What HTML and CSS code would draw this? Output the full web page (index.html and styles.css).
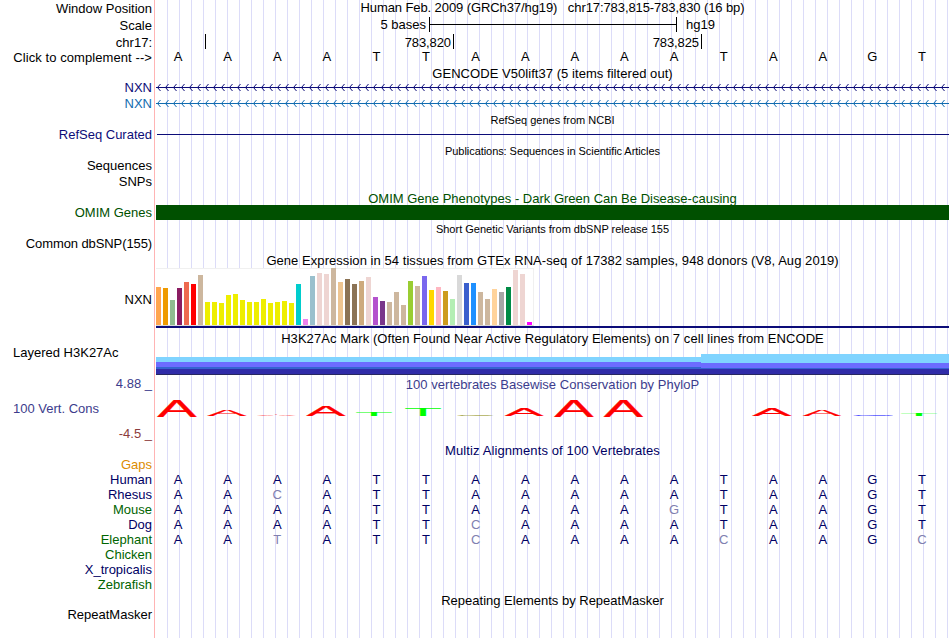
FILE: index.html
```
<!DOCTYPE html>
<html lang="en">
<head>
  <meta charset="UTF-8">
  <title>Genome Browser hg19 chr17:783,815-783,830</title>
  <link rel="stylesheet" href="styles.css">
</head>
<body>
  <div class="browser">
    <div class="row h17">
      <div class="label">Window Position</div>
      <div class="data title position">Human Feb. 2009 (GRCh37/hg19)   chr17:783,815-783,830 (16 bp)</div>
    </div>
    <div class="row h17">
      <div class="label">Scale</div>
      <div class="data scale">
        <span class="scale-name">5 bases</span>
        <span class="scale-bar"></span>
        <span>hg19</span>
      </div>
    </div>
    <div class="row h16">
      <div class="label ruler-label">chr17:</div>
      <div class="data ruler">
        <span class="tick first"></span>
        <span class="tick">783,820</span>
        <span class="tick">783,825</span>
      </div>
    </div>
    <div class="row">
      <div class="label complement">Click to complement --&gt;</div>
      <div class="data bases top-bases" data-seq="AAAATTAAAAATAAGT"></div>
    </div>

    <div class="row">
      <div class="data title gencode">GENCODE V50lift37 (5 items filtered out)</div>
    </div>
    <div class="row h16 navy">
      <div class="label">NXN</div>
      <svg class="data" width="793" height="16">
        <defs>
          <pattern id="arrows" x="1" width="8" height="16" patternUnits="userSpaceOnUse">
            <path d="M3.5 4 L0.5 7.5 L3.5 11" fill="none" stroke="#0c0c78"/>
          </pattern>
        </defs>
        <rect y="7" width="793" height="1" fill="#0c0c78"/>
        <rect width="793" height="16" fill="url(#arrows)"/>
      </svg>
    </div>
    <div class="row blue">
      <div class="label">NXN</div>
      <svg class="data" width="793" height="15">
        <defs>
          <pattern id="arrowsBlue" x="1" width="8" height="15" patternUnits="userSpaceOnUse">
            <path d="M3.5 4 L0.5 7.5 L3.5 11" fill="none" stroke="#116cb0"/>
          </pattern>
        </defs>
        <rect y="7" width="793" height="1" fill="#116cb0"/>
        <rect width="793" height="15" fill="url(#arrowsBlue)"/>
      </svg>
    </div>

    <div class="row h16">
      <div class="data title small refseq-title">RefSeq genes from NCBI</div>
    </div>
    <div class="row h16 navy">
      <div class="label">RefSeq Curated</div>
      <div class="data"><div class="gene-line"></div></div>
    </div>

    <div class="row">
      <div class="data title small publications">Publications: Sequences in Scientific Articles</div>
    </div>
    <div class="row h16">
      <div class="label">Sequences</div>
    </div>
    <div class="row">
      <div class="label">SNPs</div>
    </div>

    <div class="row h16 green">
      <div class="data title omim-title">OMIM Gene Phenotypes - Dark Green Can Be Disease-causing</div>
    </div>
    <div class="row green">
      <div class="label">OMIM Genes</div>
      <div class="data omim"></div>
    </div>

    <div class="row h16">
      <div class="data title small dbsnp">Short Genetic Variants from dbSNP release 155</div>
    </div>
    <div class="row h16">
      <div class="label snp-label">Common dbSNP(155)</div>
    </div>

    <div class="row h16">
      <div class="data title gtex-title">Gene Expression in 54 tissues from GTEx RNA-seq of 17382 samples, 948 donors (V8, Aug 2019)</div>
    </div>
    <div class="row gtex-row">
      <div class="label">NXN</div>
      <div class="data gtex">
        <div class="gtex-bars" id="gtexBars"></div>
      </div>
    </div>

    <div class="row h18">
      <div class="data title h3k-title">H3K27Ac Mark (Often Found Near Active Regulatory Elements) on 7 cell lines from ENCODE</div>
    </div>
    <div class="row h3k-row">
      <div class="label left">Layered H3K27Ac</div>
      <div class="data h3k">
        <div class="h3k-left"></div>
        <div class="h3k-right"></div>
      </div>
    </div>

    <div class="row h18 cons">
      <div class="label">4.88 _</div>
      <div class="data title phylop-title">100 vertebrates Basewise Conservation by PhyloP</div>
    </div>
    <div class="row cons-row cons">
      <div class="label left">100 Vert. Cons</div>
      <svg class="data" id="phylop" width="793" height="32"></svg>
    </div>
    <div class="row h16 cons-min">
      <div class="label">-4.5 _</div>
    </div>

    <div class="row h16 species">
      <div class="data title multiz-title">Multiz Alignments of 100 Vertebrates</div>
    </div>
    <div class="row gaps">
      <div class="label">Gaps</div>
    </div>
    <div class="row species">
      <div class="label">Human</div>
      <div class="data bases" data-seq="AAAATTAAAAATAAGT"></div>
    </div>
    <div class="row species">
      <div class="label">Rhesus</div>
      <div class="data bases" data-seq="AAcATTAAAAATAAGT"></div>
    </div>
    <div class="row species alt">
      <div class="label">Mouse</div>
      <div class="data bases" data-seq="AAAATTAAAAgTAAGT"></div>
    </div>
    <div class="row species">
      <div class="label">Dog</div>
      <div class="data bases" data-seq="AAAATTcAAAATAAGT"></div>
    </div>
    <div class="row species alt">
      <div class="label">Elephant</div>
      <div class="data bases" data-seq="AAtATTcAAAAcAAGc"></div>
    </div>
    <div class="row species alt">
      <div class="label">Chicken</div>
    </div>
    <div class="row species">
      <div class="label">X_tropicalis</div>
    </div>
    <div class="row species alt">
      <div class="label">Zebrafish</div>
    </div>

    <div class="row">
      <div class="data title repeat-title">Repeating Elements by RepeatMasker</div>
    </div>
    <div class="row">
      <div class="label">RepeatMasker</div>
    </div>
  </div>

  <script>
    // lower case = base differs from human
    document.querySelectorAll(".bases").forEach(el => {
      for (const c of el.dataset.seq) {
        const span = document.createElement("span");
        span.textContent = c.toUpperCase();
        if (c !== c.toUpperCase()) span.className = "mismatch";
        el.appendChild(span);
      }
    });

    const heights = [38,37,25,37,43,41,50,23,23,22,30,31,25,23,23,26,22,23,24,22,41,6,49,52,51,57,43,
      46,41,44,48,28,24,23,33,20,44,39,49,35,38,34,26,50,42,42,33,26,36,33,38,55,51,3];
    const brain = Array(13).fill("#eeee00");
    const colors = ["#ffa54f","#ee9a00","#8fbc8f","#8b1c62","#ee6a50","#ff0000","#cdb79e", ...brain,
      "#00cdcd","#ee82ee","#9ac0cd","#eed5d2","#eed5d2","#cdb79e","#eec591","#8b7355","#8b7355",
      "#cdaa7d","#eed5d2","#b452cd","#7a378b","#cdb79e","#cdb79e","#cdb79e","#9acd32","#cdb79e",
      "#7a67ee","#ffd700","#ffb6c1","#cd9b1d","#b4eeb4","#d9d9d9","#3a5fcd","#1e90ff","#cdb79e",
      "#cdb79e","#ffd39b","#a6a6a6","#008b45","#eed5d2","#eed5d2","#ff00ff"];
    const gtex = document.getElementById("gtexBars");
    heights.forEach((h, i) => {
      const bar = document.createElement("div");
      bar.className = "bar";
      bar.style.height = h + "px";
      bar.style.background = colors[i];
      gtex.appendChild(bar);
    });

    // letter, left, width, top, bottom, color
    const logo = [
      ["A", 1.5, 39, 7, 24, "#ff0000"],
      ["A", 51.5, 39, 17, 23, "#ff0000"],
      ["A", 101, 39, 22, 23, "#ff0000"],
      ["A", 150.5, 39, 13, 23, "#ff0000"],
      ["T", 200, 36, 19, 23, "#00ff00"],
      ["T", 249, 36, 16, 23, "#00ff00"],
      ["C", 301, 38, 22, 23, "#888800"],
      ["A", 349, 38.5, 15, 23, "#ff0000"],
      ["A", 398.5, 39, 7, 24, "#ff0000"],
      ["A", 448, 39, 7, 24, "#ff0000"],
      ["A", 596.5, 39, 15, 23, "#ff0000"],
      ["A", 647, 38, 17, 23, "#ff0000"],
      ["G", 697, 41, 22, 23, "#0000ff"],
      ["T", 745, 36, 21, 23, "#00ff00"]
    ];
    // glyph left edge and width at 100px
    const glyph = { A: [0.3, 66.2], T: [2.1, 57], C: [5, 64], G: [5, 67] };
    const svg = document.getElementById("phylop");
    logo.forEach(([c, x, w, top, bottom, color]) => {
      const t = document.createElementNS("http://www.w3.org/2000/svg", "text");
      const sx = w / glyph[c][1];
      const sy = (bottom - top) / 68.8;
      t.textContent = c;
      t.setAttribute("fill", color);
      if (c === "A") {
        t.setAttribute("stroke", color);
        t.setAttribute("stroke-width", 1);
      }
      t.setAttribute("transform", `translate(${x - glyph[c][0] * sx} ${bottom}) scale(${sx} ${sy})`);
      svg.appendChild(t);
    });
  </script>
</body>
</html>
```
FILE: styles.css
```
body {
  margin: 0;
  background: #fff;
  color: #000;
  font-family: "Liberation Sans", Arial, sans-serif;
  font-size: 13px;
  overflow: hidden;
}

.browser {
  width: 949px;
  height: 638px;
  background:
    linear-gradient(#ffb4b4, #ffb4b4) 154px 0 / 1px 100% no-repeat,
    repeating-linear-gradient(to right, transparent 0 11px, #dcdcf8 11px 12px) 156px 0 / 793px 100% no-repeat;
}

.row {
  display: grid;
  grid-template-columns: 156px 793px;
  height: 15px;
  line-height: 15px;
  white-space: pre;
}

.h16 { height: 16px; line-height: 16px; }
.h17 { height: 17px; line-height: 17px; }
.h18 { height: 18px; line-height: 18px; }

.label {
  grid-column: 1;
  text-align: right;
  padding-right: 4px;
}

.label.left {
  text-align: left;
  padding-left: 13px;
}

.data {
  grid-column: 2;
  display: block;
}

.title { text-align: center; }
.small { font-size: 11px; }

.position { line-height: 15px; letter-spacing: -0.09px; }
.gencode { line-height: 18px; letter-spacing: 0.05px; }
.refseq-title { line-height: 18px; }
.publications { line-height: 17px; letter-spacing: -0.06px; }
.omim-title { line-height: 20px; }
.dbsnp { line-height: 18px; }
.gtex-title { line-height: 18px; letter-spacing: 0.055px; }
.h3k-title { line-height: 20px; letter-spacing: 0.06px; }
.phylop-title { line-height: 20px; letter-spacing: 0.03px; }
.multiz-title { line-height: 20px; letter-spacing: 0.11px; }
.repeat-title { line-height: 17px; }
.complement { letter-spacing: 0.08px; }
.snp-label { letter-spacing: -0.1px; }

.navy { color: #0c0c78; }
.blue { color: #116cb0; }
.green { color: #005000; }
.cons { color: #3c3c8c; }
.cons-min { color: #8c3c3c; line-height: 18px; }
.gaps { color: #dc8c00; }
.species { color: #000064; }
.alt .label { color: #006400; }

/* ruler */
.ruler-label { line-height: 18px; }

.scale {
  display: flex;
  line-height: 15px;
}

.scale-name {
  width: 270px;
  text-align: right;
  margin-right: 3px;
}

.scale-bar {
  width: 246px;
  height: 15px;
  border-left: 1px solid #000;
  border-right: 1px solid #000;
  margin-right: 9px;
  background: linear-gradient(#000, #000) 0 7px / 100% 1px no-repeat;
}

.ruler {
  display: flex;
}

.tick {
  box-sizing: border-box;
  width: 248px;
  height: 15px;
  padding-right: 2px;
  border-right: 1px solid #000;
  text-align: right;
  line-height: 17px;
  letter-spacing: -0.1px;
}

.tick.first { width: 50px; }

.bases {
  display: grid;
  grid-template-columns: repeat(16, 49.6px);
  margin-left: -2.7px;
  text-align: center;
}

.top-bases { line-height: 13px; }

.mismatch { color: #8080b0; }

.gene-line {
  height: 1px;
  margin: 7px 0 0 1px;
  background: #0c0c78;
}

.omim { background: #005000; }

/* GTEx */
.gtex-row {
  height: 61px;
  line-height: 64px;
}

.gtex {
  height: 58px;
  border-bottom: 2px solid #0c0c78;
  white-space: normal;
}

.gtex-bars {
  box-sizing: border-box;
  display: flex;
  align-items: flex-end;
  gap: 2px;
  width: 378px;
  height: 58px;
  background: #fff;
  border-top: 1px solid #f0f0f0;
  border-right: 1px solid #f0f0f0;
  border-bottom: 1px solid #d8d8d8;
}

.bar {
  flex: none;
  width: 5px;
}

/* H3K27Ac */
.h3k-row {
  height: 28px;
  line-height: 12px;
}

.h3k {
  display: flex;
  align-items: flex-end;
}

.h3k-left {
  width: 545px;
  height: 18px;
  background: linear-gradient(#80d4ff 5px, #6c6cff 5px 10px, #3464d0 10px 12px, #302ca8 12px 17px, #282860 17px);
}

.h3k-right {
  flex: 1;
  height: 21px;
  background: linear-gradient(#80d4ff 9px, #6c6cff 9px 14px, #3464d0 14px 15px, #302ca8 15px 20px, #282860 20px);
}

/* PhyloP */
.cons-row {
  height: 32px;
  line-height: 32px;
}

#phylop { font-size: 100px; }
```
